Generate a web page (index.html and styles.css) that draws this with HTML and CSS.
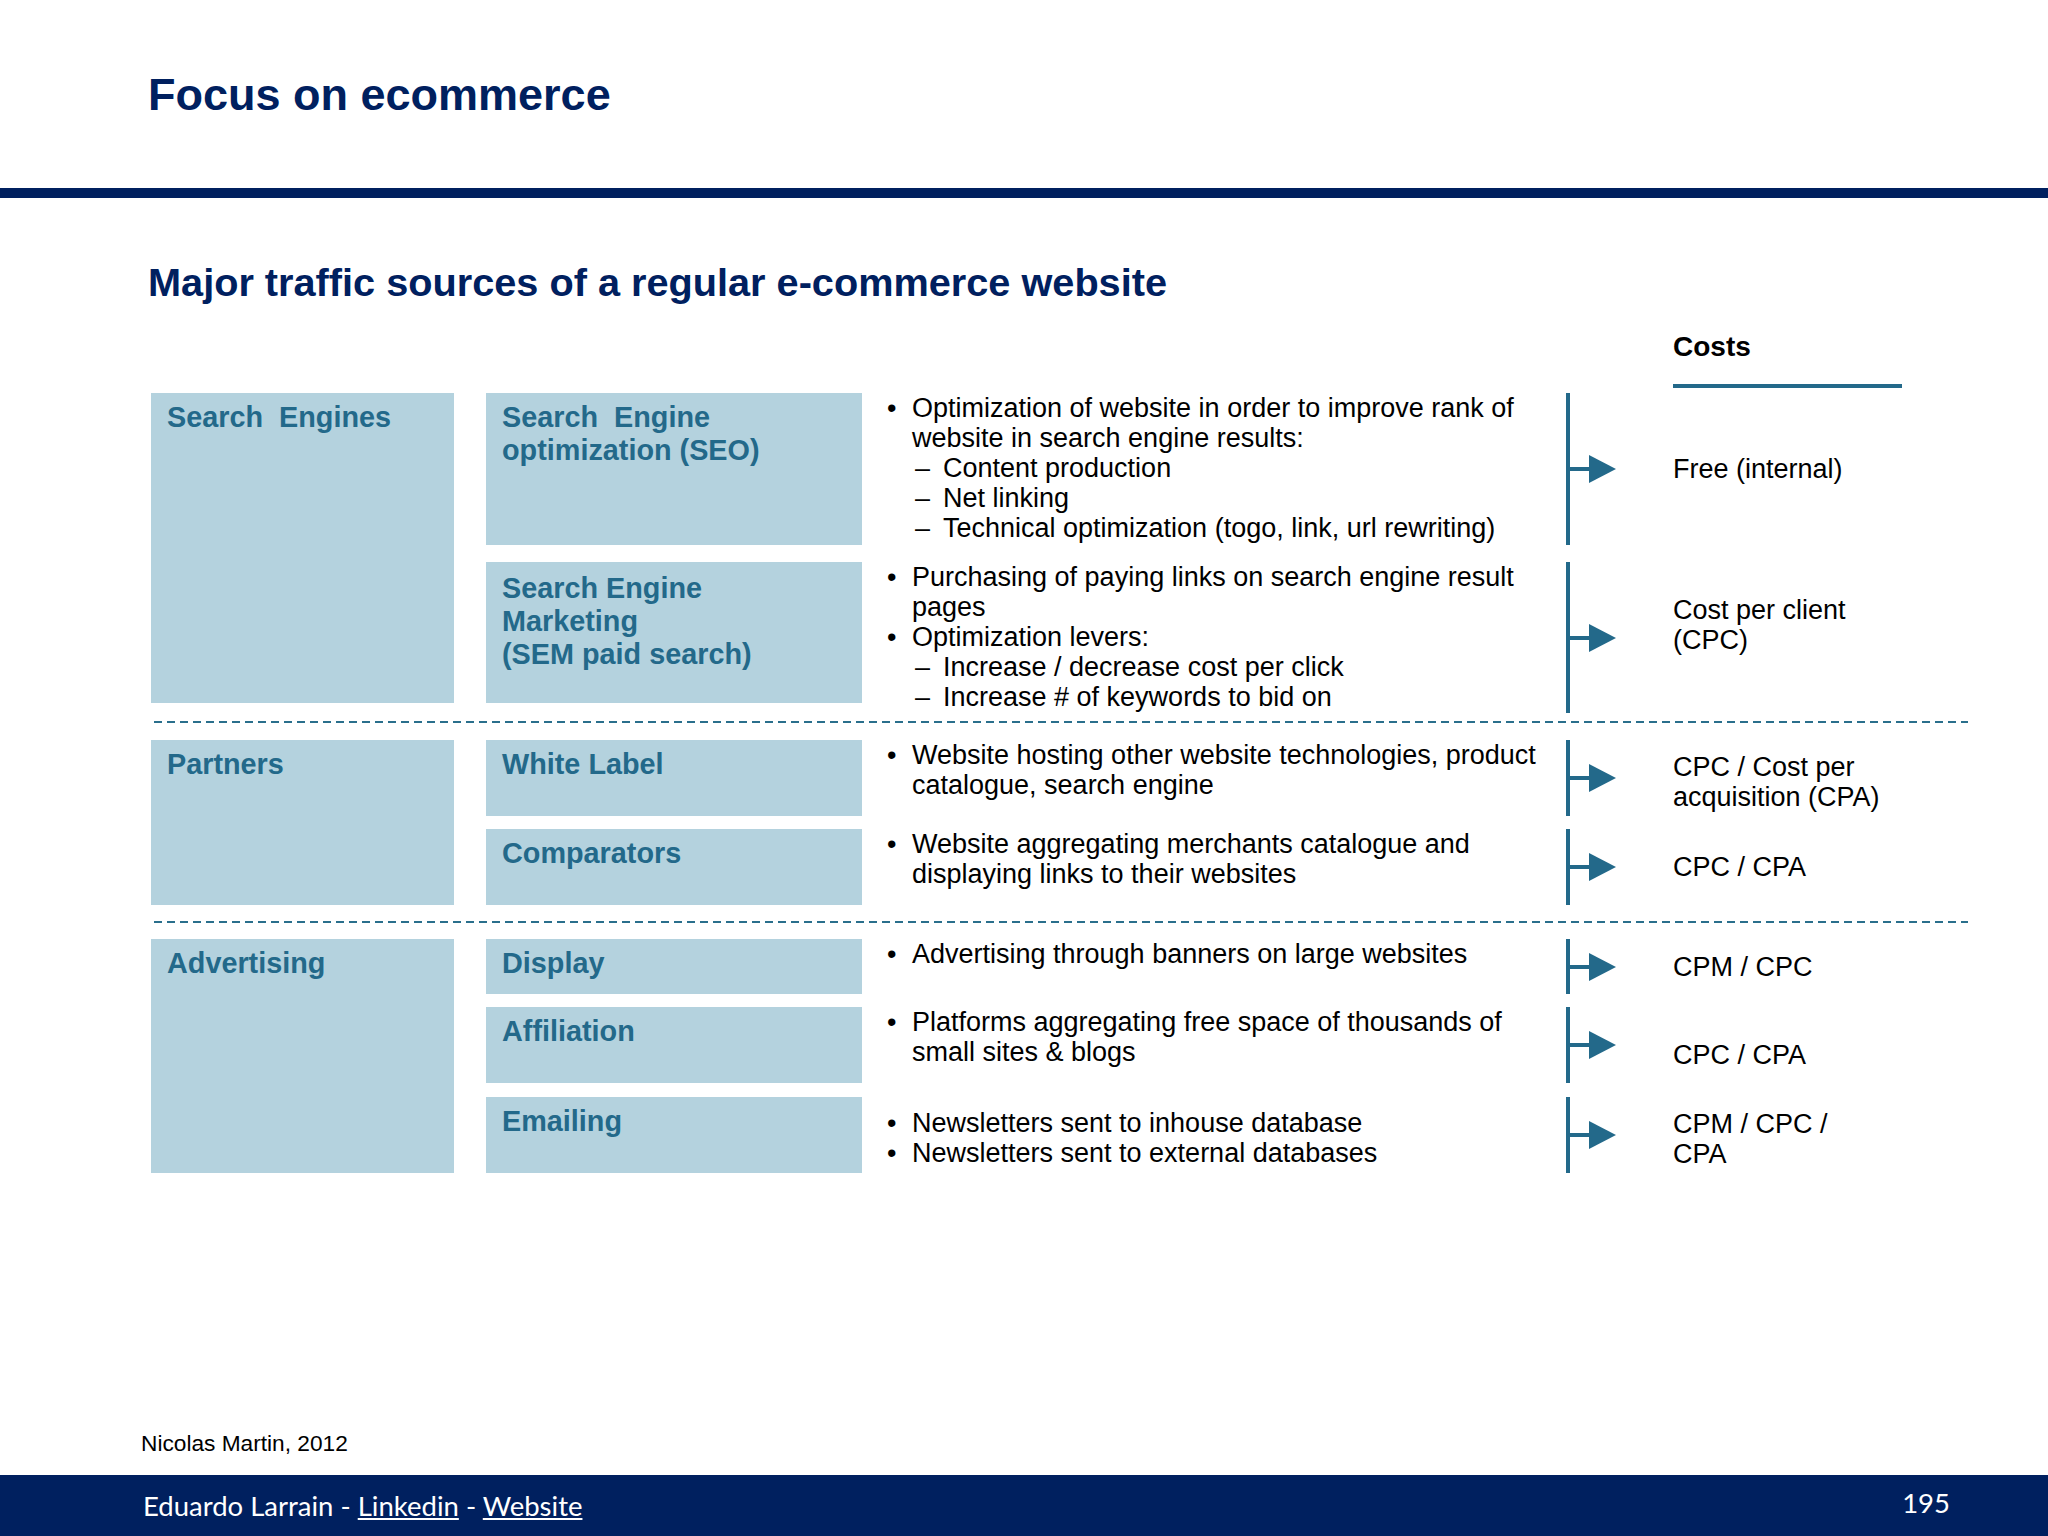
FILE: index.html
```html
<!DOCTYPE html>
<html lang="en">
<head>
<meta charset="utf-8">
<title>Focus on ecommerce</title>
<link rel="stylesheet" href="styles.css">
</head>
<body>
<div class="page">
  <header class="head">
    <h1 class="title">Focus on ecommerce</h1>
  </header>
  <div class="navbar"></div>

  <main class="content">
    <h2 class="subtitle">Major traffic sources of a regular e-commerce website</h2>
    <div class="costs-head">Costs</div>

    <section class="group">
      <div class="box box-main">Search&nbsp; Engines</div>
      <div class="subs">
        <div class="sub h152">
          <div class="box">Search&nbsp; Engine<br>optimization (SEO)</div>
          <div class="desc">
            <p class="b">Optimization of website in order to improve rank of<br>website in search engine results:</p>
            <p class="d">Content production</p>
            <p class="d">Net linking</p>
            <p class="d">Technical optimization (togo, link, url rewriting)</p>
          </div>
          <div class="bracket"><svg class="arrow" viewBox="0 0 46 28" width="46" height="28"><rect x="0" y="12" width="21" height="4"/><polygon points="19,0 46,14 19,28"/></svg></div>
          <div class="cost">Free (internal)</div>
        </div>
        <div class="sub h141">
          <div class="box box-sem">Search Engine<br>Marketing<br>(SEM paid search)</div>
          <div class="desc">
            <p class="b">Purchasing of paying links on search engine result<br>pages</p>
            <p class="b">Optimization levers:</p>
            <p class="d">Increase / decrease cost per click</p>
            <p class="d">Increase # of keywords to bid on</p>
          </div>
          <div class="bracket bracket-tall"><svg class="arrow" viewBox="0 0 46 28" width="46" height="28"><rect x="0" y="12" width="21" height="4"/><polygon points="19,0 46,14 19,28"/></svg></div>
          <div class="cost cost-up">Cost per client<br>(CPC)</div>
        </div>
      </div>
    </section>

    <div class="sep sep1"></div>

    <section class="group">
      <div class="box box-main">Partners</div>
      <div class="subs gap13">
        <div class="sub h76">
          <div class="box">White Label</div>
          <div class="desc">
            <p class="b">Website hosting other website technologies, product<br>catalogue, search engine</p>
          </div>
          <div class="bracket"><svg class="arrow" viewBox="0 0 46 28" width="46" height="28"><rect x="0" y="12" width="21" height="4"/><polygon points="19,0 46,14 19,28"/></svg></div>
          <div class="cost cost-dn">CPC / Cost per<br>acquisition (CPA)</div>
        </div>
        <div class="sub h76">
          <div class="box">Comparators</div>
          <div class="desc">
            <p class="b">Website aggregating merchants catalogue and<br>displaying links to their websites</p>
          </div>
          <div class="bracket"><svg class="arrow" viewBox="0 0 46 28" width="46" height="28"><rect x="0" y="12" width="21" height="4"/><polygon points="19,0 46,14 19,28"/></svg></div>
          <div class="cost">CPC / CPA</div>
        </div>
      </div>
    </section>

    <div class="sep sep2"></div>

    <section class="group">
      <div class="box box-main">Advertising</div>
      <div class="subs gap13">
        <div class="sub h55">
          <div class="box">Display</div>
          <div class="desc">
            <p class="b">Advertising through banners on large websites</p>
          </div>
          <div class="bracket"><svg class="arrow" viewBox="0 0 46 28" width="46" height="28"><rect x="0" y="12" width="21" height="4"/><polygon points="19,0 46,14 19,28"/></svg></div>
          <div class="cost">CPM / CPC</div>
        </div>
        <div class="sub h76">
          <div class="box">Affiliation</div>
          <div class="desc">
            <p class="b">Platforms aggregating free space of thousands of<br>small sites &amp; blogs</p>
          </div>
          <div class="bracket"><svg class="arrow" viewBox="0 0 46 28" width="46" height="28"><rect x="0" y="12" width="21" height="4"/><polygon points="19,0 46,14 19,28"/></svg></div>
          <div class="cost cost-low">CPC / CPA</div>
        </div>
        <div class="sub h76 mt1">
          <div class="box">Emailing</div>
          <div class="desc desc-mid">
            <p class="b">Newsletters sent to inhouse database</p>
            <p class="b">Newsletters sent to external databases</p>
          </div>
          <div class="bracket"><svg class="arrow" viewBox="0 0 46 28" width="46" height="28"><rect x="0" y="12" width="21" height="4"/><polygon points="19,0 46,14 19,28"/></svg></div>
          <div class="cost cost-dn">CPM / CPC /<br>CPA</div>
        </div>
      </div>
    </section>
  </main>

  <div class="source">Nicolas Martin, 2012</div>

  <footer class="footer">
    <div class="credit">Eduardo Larrain - <a class="flink" href="#">Linkedin</a> - <a class="flink" href="#">Website</a></div>
    <div class="pagenum">195</div>
  </footer>
</div>
</body>
</html>
```

FILE: styles.css
```css
html, body {
  margin: 0;
  padding: 0;
  background: #ffffff;
}

.page {
  width: 2048px;
  height: 1536px;
  display: flex;
  flex-direction: column;
  font-family: "Liberation Sans", Arial, sans-serif;
  color: #000000;
}

.head {
  height: 188px;
  box-sizing: border-box;
  padding: 68px 0 0 148px;
}

.title {
  margin: 0;
  font-size: 45px;
  line-height: 54px;
  font-weight: 700;
  color: #00205f;
}

.navbar {
  height: 10px;
  background: #00205f;
}

.content {
  padding-left: 151px;
  width: 1817px;
}

.subtitle {
  margin: 61px 0 0 -3px;
  font-size: 39.7px;
  line-height: 46px;
  font-weight: 700;
  color: #00205f;
}

.costs-head {
  margin: 25px 0 0 1522px;
  width: 229px;
  font-size: 28px;
  line-height: 34px;
  font-weight: 700;
  padding-bottom: 20px;
  border-bottom: 4px solid #23698a;
}

.group {
  display: flex;
  margin-top: 5px;
}

.sep + .group {
  margin-top: 0;
}

.box {
  background: #b4d2de;
  color: #23698a;
  font-weight: 700;
  font-size: 28.8px;
  line-height: 33px;
  padding: 8px 16px 0 16px;
  box-sizing: border-box;
  white-space: nowrap;
}

.box-sem {
  padding-top: 10px;
}

.box-main {
  width: 303px;
  margin-right: 32px;
  flex: none;
}

.subs {
  display: flex;
  flex-direction: column;
  gap: 17px;
}

.subs.gap13 {
  gap: 13px;
}

.sub {
  display: grid;
  grid-template-columns: 376px 704px 107px 295px;
  grid-template-rows: 100%;
}

.mt1 {
  margin-top: 1px;
}

.h152 { height: 152px; }
.h141 { height: 141px; }
.h76 { height: 76px; }
.h55 { height: 55px; }

.desc {
  padding-left: 25px;
  font-size: 27px;
  line-height: 30px;
  white-space: nowrap;
}

.desc-mid {
  padding-top: 11px;
}

.desc p {
  margin: 0;
  position: relative;
}

.desc .b {
  padding-left: 25px;
}

.desc .b::before {
  content: "\2022";
  position: absolute;
  left: 0;
  top: 0;
}

.desc .d {
  padding-left: 56px;
}

.desc .d::before {
  content: "\2013";
  position: absolute;
  left: 28px;
  top: 0;
}

.bracket {
  border-left: 4px solid #23698a;
  display: flex;
  align-items: center;
}

.bracket-tall {
  align-self: start;
  height: 151px;
}

.arrow {
  display: block;
  fill: #23698a;
}

.cost {
  display: flex;
  align-items: center;
  font-size: 27px;
  line-height: 30px;
  white-space: nowrap;
}

.cost-low {
  padding-top: 20px;
}

.cost-up {
  padding-bottom: 16px;
}

.cost-dn {
  padding-top: 7px;
}

.sep {
  height: 2px;
  margin-left: 3px;
  background: repeating-linear-gradient(90deg, #2a6f8c 0 8px, transparent 8px 13px);
}

.sep1 {
  margin-top: 18px;
  margin-bottom: 17px;
}

.sep2 {
  margin-top: 16px;
  margin-bottom: 16px;
}

.source {
  margin: auto 0 19px 141px;
  font-size: 22.7px;
  line-height: 26px;
  color: #000000;
}

.footer {
  height: 61px;
  background: #00205f;
  display: flex;
  align-items: center;
  justify-content: space-between;
  padding: 0 98px 0 143px;
  font-family: Lato, "Open Sans", sans-serif;
  color: #ffffff;
  font-size: 27.5px;
}

.flink {
  color: #ffffff;
  text-decoration: underline;
}

.pagenum {
  margin-top: -6px;
}
```
